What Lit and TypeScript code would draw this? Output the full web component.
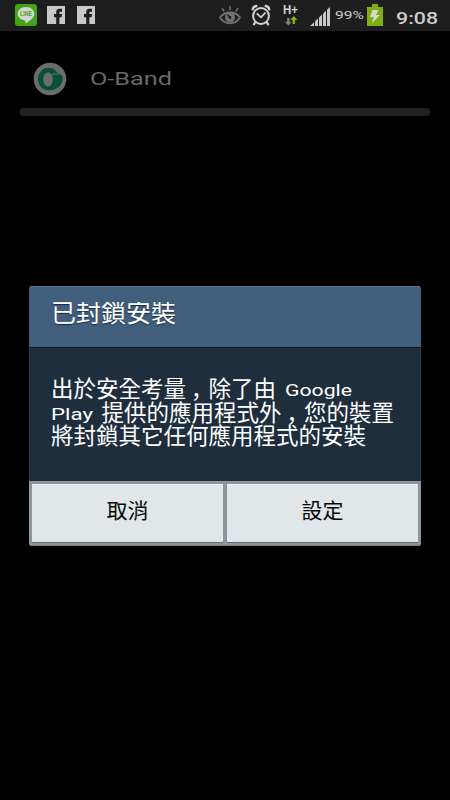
import { LitElement, html, css, svg } from "lit";
import { customElement, property } from "lit/decorators.js";

/** Latin text set in an extended face: the glyphs are stretched to the given width. */
@customElement("wide-text")
export class WideText extends LitElement {
  @property() text = "";
  @property({ type: Number }) width = 60;
  @property({ type: Number }) size = 16;
  @property() weight = "400";

  static styles = css`
    :host { display: inline-block; line-height: 0; }
    svg { display: block; overflow: visible; }
    text { font-family: "Roboto", "Liberation Sans", sans-serif; fill: currentColor; }
  `;

  render() {
    return html`<svg width=${this.width} height=${this.size}>
      ${svg`<text x="0" y=${this.size * 0.8} font-size=${this.size} font-weight=${this.weight}
        textLength=${this.width} lengthAdjust="spacingAndGlyphs">${this.text}</text>`}
    </svg>`;
  }
}

@customElement("status-bar")
export class StatusBar extends LitElement {
  static styles = css`
    :host { display: block; height: 31px; background: #1e1e1e; color: #cdcdcd; }
    .bar { display: flex; height: 31px; align-items: flex-start; box-sizing: border-box; padding: 4px 12px 0 15px; }
    svg { display: block; flex: none; }
    .fb { margin: 2px 0 0 10px; }
    .fb + .fb { margin-left: 12px; }
    .space { flex: 1; }
    .eye { margin-top: 1px; }
    .clock { margin-left: 10px; }
    .net { margin-left: 12px; }
    .signal { margin-left: 11px; margin-top: 3px; }
    .pct { margin: 6px 0 0 5px; }
    .battery { margin-left: 3px; }
    .time { margin: 7px 0 0 13px; }
    .line { font: bold 6.5px "Liberation Sans", sans-serif; fill: #43a516; }
    .hp { font: bold 12px "Liberation Sans", sans-serif; fill: #d0d0d0; }
  `;

  private facebook() {
    return html`<svg class="fb" width="18" height="18" viewBox="0 0 18 18">
      <path fill="#c8c8c8" d="M0 0h18v18H0z" />
      <path fill="#1e1e1e" d="M9.2 18v-6.800H7V8h2.200V6.200C9.200 3.700 10.500 2.800 12.600 2.800H15v3h-1.400c-.9 0-1.200.3-1.200 1V8H15l-.4 3.200h-2.200V18z" />
    </svg>`;
  }

  render() {
    return html`<div class="bar">
      <svg width="22" height="22" viewBox="0 0 22 22">
        <rect width="22" height="22" rx="3" fill="#43a516" />
        <path fill="#d4d4d4" d="M11 3c-4.800 0-8.300 2.900-8.300 6.800 0 3.600 3 6 7 6.600.7.1.8.5.7 2 0 .8.3 1 1.100.5 3.600-2.100 7.800-5.100 7.800-9.100C19.300 5.900 15.800 3 11 3z" />
        <text class="line" x="5" y="12" textLength="12" lengthAdjust="spacingAndGlyphs">LINE</text>
      </svg>
      ${this.facebook()}${this.facebook()}
      <div class="space"></div>
      <svg class="eye" width="22" height="20" viewBox="0 0 22 20" fill="none" stroke="#717171">
        <path stroke-width="1.800" d="M1 12.500C6 5.800 16 5.800 21 12.500C16 20.200 6 20.200 1 12.500z" />
        <path stroke-width="1.500" d="M11 5V1M5.200 6.500L3 3.200M16.800 6.500L19 3.200" />
        <circle cx="11" cy="12.500" r="5" fill="#717171" stroke="none" />
        <path stroke="#1e1e1e" stroke-width="1.300" d="M8.500 9.800l2.500 2.700" />
        <circle cx="11" cy="12.500" r="1.400" fill="#1e1e1e" stroke="none" />
      </svg>
      <svg class="clock" width="20" height="22" viewBox="0 0 20 22" fill="none" stroke="#d2d2d2">
        <circle cx="10" cy="12" r="7.900" stroke-width="2" />
        <path stroke-width="1.800" d="M5.700 9.300L10 13.300l4.400-4.700" />
        <path stroke-width="2.400" stroke-linecap="round" d="M1.800 5.300C2.200 3.500 3.500 2.300 5.300 2M18.200 5.300C17.800 3.500 16.500 2.300 14.700 2" />
        <path stroke-width="2.200" d="M4.200 18L2.500 21.300M15.800 18l1.700 3.300" />
      </svg>
      <svg class="net" width="16" height="22" viewBox="0 0 16 22">
        <text class="hp" x="0" y="9.800" textLength="15" lengthAdjust="spacingAndGlyphs">H+</text>
        <path fill="#858585" d="M4.200 14h2.200v3.800h2.200L5.300 21.500 2 17.800h2.200z" />
        <path fill="#80be0b" d="M9.700 20h2.200v-4h2.400L10.800 12 7.300 16h2.400z" />
      </svg>
      <svg class="signal" width="20" height="19" viewBox="0 0 20 19" fill="#c8c8c8">
        <path d="M0 19L4 15.200V19zM5 19v-4.800l3-2.800V19zM9 19v-8.500l3-3V19zM13 19V6.700l3-3V19zM17 19V2.800L20 0v19z" />
      </svg>
      <wide-text class="pct" text="99%" .width=${29} .size=${11.5}></wide-text>
      <svg class="battery" width="16" height="22" viewBox="0 0 16 22">
        <path fill="#80ad16" d="M0 3h5V0h6v3h5v19H0z" />
        <path fill="#d6dbcc" d="M5.500 6h6L9 11h4L5 19l1.800-6H3z" />
      </svg>
      <wide-text class="time" text="9:08" .width=${42} .size=${16} weight="500"></wide-text>
    </div>`;
  }
}

@customElement("app-root")
export class AppRoot extends LitElement {
  static styles = css`
    :host {
      display: flex; flex-direction: column; width: 450px; height: 800px; overflow: hidden;
      background: #000; color: #fff; font-family: "Noto Sans CJK TC", sans-serif;
    }
    .app { display: flex; align-items: center; padding: 31px 0 0 33px; height: 34px; color: #696969; }
    .logo { display: block; margin-right: 23px; }
    .progress { margin: 12px 20px 0; height: 8px; border-radius: 3px; background: #222; }
    .dialog {
      box-sizing: border-box; width: 392px; height: 260px; margin: 170px 0 0 29px;
      border-radius: 3px; overflow: hidden; display: flex; flex-direction: column;
      background: #1e2e3d;
    }
    .head { height: 62px; box-sizing: border-box; padding: 15px 0 0 22px; background: #415f7d; border-top: 1px solid #55779b; border-bottom: 1px solid #0d1822; }
    .title { height: 24px; overflow: hidden; font-size: 25px; text-shadow: 0 1px 1px #1c2c3c; display: flex; align-items: flex-end; line-height: 30px; }
    .body { height: 133px; box-sizing: border-box; padding: 28px 0 0 21px; border: 1px solid #2f3f4d; border-width: 0 1px; font-size: 22.5px; }
    .row { display: flex; height: 23.7px; line-height: 23.7px; white-space: nowrap; align-items: center; }
    .comma { position: relative; top: 8px; left: -1px; }
    .google { margin: 7px 0 0 9px; }
    .play { margin: 7px 8.5px 0 0; }
    .actions { flex: 1; display: flex; gap: 4px; padding: 3px 3px 3px; background: #8d959d; border-bottom: 1px solid #777f86; }
    .button {
      flex: 1; box-sizing: border-box; background: #e1e6e9; border: 0; padding: 0 0 8px; border-radius: 1px;
      box-shadow: inset 0 1px #f5f7f8, 0 1px #626a72; color: #080808;
      font: 400 21px "Noto Sans CJK TC", sans-serif;
    }
  `;

  render() {
    const comma = html`<span class="comma">，</span>`;
    return html`
      <status-bar></status-bar>
      <div class="app">
        <svg class="logo" width="34" height="34" viewBox="0 0 34 34">
          <circle cx="17" cy="17" r="16.300" fill="#6c6c6c" />
          <ellipse cx="15.500" cy="17" rx="10.500" ry="11.300" fill="#075236" />
          <path fill="#075236" d="M18 14h11.500c.8 8-3.500 13.500-12 14.300z" />
          <path fill="#6c6c6c" d="M20.500 11.500L27 9.500l3 4.500h-9z" />
          <path fill="#075236" d="M19 13.500l4.500-3.500 5.500 3.500v2H19z" />
          <ellipse cx="15" cy="17.500" rx="4.800" ry="7" fill="#6c6c6c" />
          <path fill="none" stroke="#6c6c6c" d="M19 13l3.500-1 6.500-.3" />
        </svg>
        <wide-text text="O-Band" .width=${82} .size=${18.8}></wide-text>
      </div>
      <div class="progress"></div>
      <div class="dialog">
        <div class="head"><div class="title">已封鎖安裝</div></div>
        <div class="body">
          <div class="row">出於安全考量${comma}除了由<wide-text class="google" text="Google" .width=${67} .size=${16}></wide-text></div>
          <div class="row"><wide-text class="play" text="Play" .width=${42} .size=${16}></wide-text>提供的應用程式外${comma}您的裝置</div>
          <div class="row">將封鎖其它任何應用程式的安裝</div>
        </div>
        <div class="actions">
          <button class="button">取消</button>
          <button class="button">設定</button>
        </div>
      </div>
    `;
  }
}
